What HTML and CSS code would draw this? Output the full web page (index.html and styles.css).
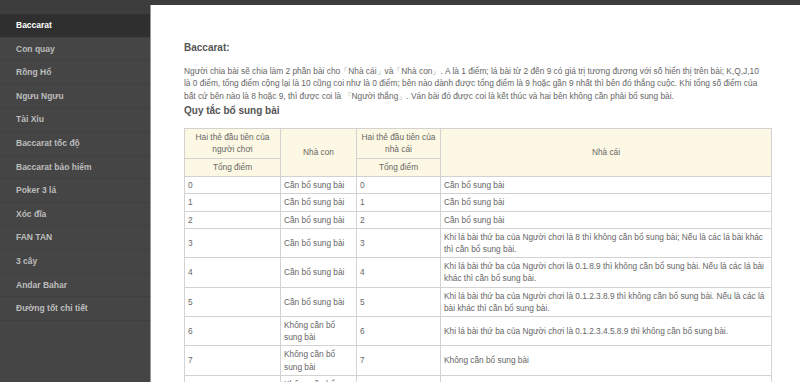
FILE: index.html
```html
<!DOCTYPE html>
<html lang="vi">
<head>
  <meta charset="UTF-8">
  <meta name="viewport" content="width=device-width, initial-scale=1.0">
  <title>Baccarat</title>
  <link rel="stylesheet" href="styles.css">
</head>
<body>
  <div class="sidebar">
    <a href="#" class="nav-item active">Baccarat</a>
    <a href="#" class="nav-item">Con quay</a>
    <a href="#" class="nav-item">Rồng Hổ</a>
    <a href="#" class="nav-item">Ngưu Ngưu</a>
    <a href="#" class="nav-item">Tài Xỉu</a>
    <a href="#" class="nav-item">Baccarat tốc độ</a>
    <a href="#" class="nav-item">Baccarat bảo hiểm</a>
    <a href="#" class="nav-item">Poker 3 lá</a>
    <a href="#" class="nav-item">Xóc đĩa</a>
    <a href="#" class="nav-item">FAN TAN</a>
    <a href="#" class="nav-item">3 cây</a>
    <a href="#" class="nav-item">Andar Bahar</a>
    <a href="#" class="nav-item">Đường tốt chi tiết</a>
  </div>

  <div class="content">
    <div class="title">Baccarat:</div>
    <p class="desc">Người chia bài sẽ chia làm 2 phần bài cho「Nhà cái」và「Nhà con」. A là 1 điểm; lá bài từ 2 đến 9 có giá trị tương đương với số hiển thị trên bài; K,Q,J,10 là 0 điểm, tổng điểm cộng lại là 10 cũng coi như là 0 điểm; bên nào dành được tổng điểm là 9 hoặc gần 9 nhất thì bên đó thắng cuộc. Khi tổng số điểm của bất cứ bên nào là 8 hoặc 9, thì được coi là 「Người thắng」. Ván bài đó được coi là kết thúc và hai bên không cần phải bổ sung bài.</p>
    <div class="subtitle">Quy tắc bổ sung bài</div>

    <table class="rules">
      <colgroup>
        <col class="c1">
        <col class="c2">
        <col class="c3">
        <col class="c4">
      </colgroup>
      <thead>
        <tr>
          <th>Hai thẻ đầu tiên của người chơi</th>
          <th rowspan="2">Nhà con</th>
          <th>Hai thẻ đầu tiên của nhà cái</th>
          <th rowspan="2">Nhà cái</th>
        </tr>
        <tr>
          <th>Tổng điểm</th>
          <th>Tổng điểm</th>
        </tr>
      </thead>
      <tbody>
        <tr><td>0</td><td>Cần bổ sung bài</td><td>0</td><td>Cần bổ sung bài</td></tr>
        <tr><td>1</td><td>Cần bổ sung bài</td><td>1</td><td>Cần bổ sung bài</td></tr>
        <tr><td>2</td><td>Cần bổ sung bài</td><td>2</td><td>Cần bổ sung bài</td></tr>
        <tr><td>3</td><td>Cần bổ sung bài</td><td>3</td><td>Khi lá bài thứ ba của Người chơi là 8 thì không cần bổ sung bài; Nếu là các lá bài khác thì cần bổ sung bài.</td></tr>
        <tr><td>4</td><td>Cần bổ sung bài</td><td>4</td><td>Khi lá bài thứ ba của Người chơi là 0.1.8.9 thì không cần bổ sung bài. Nếu là các lá bài khác thì cần bổ sung bài.</td></tr>
        <tr><td>5</td><td>Cần bổ sung bài</td><td>5</td><td>Khi lá bài thứ ba của Người chơi là 0.1.2.3.8.9 thì không cần bổ sung bài. Nếu là các lá bài khác thì cần bổ sung bài.</td></tr>
        <tr><td>6</td><td>Không cần bổ sung bài</td><td>6</td><td>Khi lá bài thứ ba của Người chơi là 0.1.2.3.4.5.8.9 thì không cần bổ sung bài.</td></tr>
        <tr><td>7</td><td>Không cần bổ sung bài</td><td>7</td><td>Không cần bổ sung bài</td></tr>
        <tr><td>8</td><td>Không cần bổ sung bài</td><td>8</td><td>Không cần bổ sung bài</td></tr>
        <tr><td>9</td><td>Không cần bổ sung bài</td><td>9</td><td>Không cần bổ sung bài</td></tr>
      </tbody>
    </table>
  </div>
</body>
</html>
```

FILE: styles.css
```css
* {
  margin: 0;
  padding: 0;
  box-sizing: border-box;
}

html, body {
  height: 100%;
  overflow: hidden;
}

body {
  font-family: "Liberation Sans", Arial, sans-serif;
  background-color: #3d3d3d;
  display: flex;
  color: #666;
}

.sidebar {
  width: 150px;
  flex-shrink: 0;
  background-color: #454545;
  border-top: 14px solid #3d3d3d;
  display: flex;
  flex-direction: column;
}

.nav-item {
  display: block;
  height: 23.6px;
  line-height: 23px;
  padding-left: 16px;
  font-size: 8.5px;
  font-weight: bold;
  color: #bdbdbd;
  text-decoration: none;
  border-bottom: 1px solid #3f3f3f;
}

.nav-item.active {
  background-color: #2f2f2f;
  color: #fff;
}

.content {
  flex: 1;
  margin-top: 5px;
  background-color: #fff;
  border-left: 1px solid #9a9a9a;
  padding: 36px 22px 0 33px;
}

.title {
  font-size: 10px;
  font-weight: bold;
  line-height: 13px;
  color: #555;
}

.desc {
  max-width: 580px;
  margin-top: 10.5px;
  font-size: 8.35px;
  line-height: 12.5px;
}

.subtitle {
  margin-top: 2px;
  font-size: 10px;
  font-weight: bold;
  line-height: 13px;
  color: #555;
}

.rules {
  margin-top: 10.5px;
  width: 587px;
  border-collapse: collapse;
  font-size: 8.3px;
  line-height: 12.2px;
  table-layout: fixed;
}

.rules .c1 { width: 96px; }
.rules .c2 { width: 76px; }
.rules .c3 { width: 84px; }
.rules .c4 { width: 331px; }

.rules th,
.rules td {
  border: 1px solid #d2d2d2;
  padding: 2px 2px 2px 3px;
  vertical-align: middle;
}

.rules th {
  background-color: #fdf8e4;
  font-weight: normal;
  text-align: center;
  padding: 2.5px 3px;
}

.rules td {
  text-align: left;
}
```
